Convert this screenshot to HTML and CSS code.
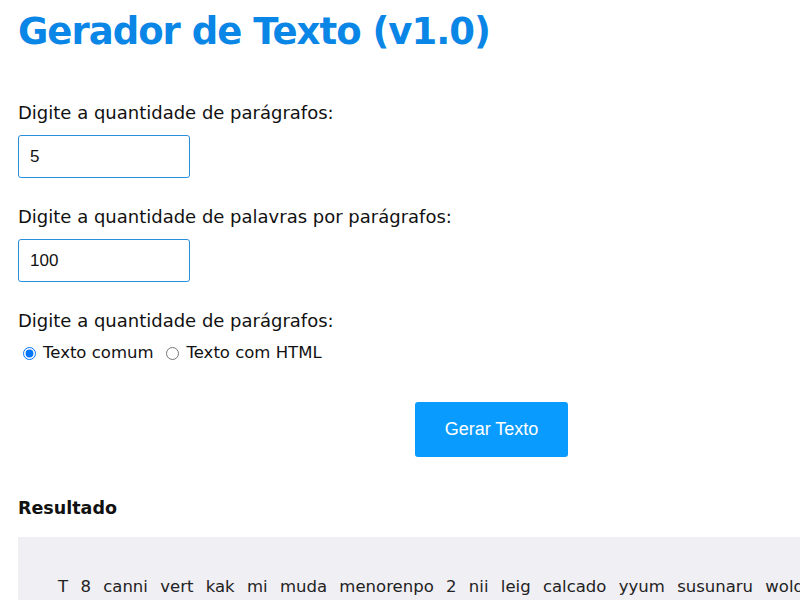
FILE: index.html
```html
<!DOCTYPE html>
<html lang="pt-BR">
<head>
<meta charset="utf-8">
<title>Gerador de Texto</title>
<link rel="stylesheet" href="styles.css">
</head>
<body>
<main class="page">
  <h1 class="title">Gerador de Texto (v1.0)</h1>

  <div class="field">
    <label class="label" for="qtd">Digite a quantidade de parágrafos:</label>
    <input class="input" id="qtd" type="text" value="5">
  </div>

  <div class="field">
    <label class="label" for="pal">Digite a quantidade de palavras por parágrafos:</label>
    <input class="input" id="pal" type="text" value="100">
  </div>

  <div class="field">
    <span class="label">Digite a quantidade de parágrafos:</span>
    <div class="radios">
      <label class="radio"><input type="radio" name="tipo" checked> Texto comum</label>
      <label class="radio"><input type="radio" name="tipo"> Texto com HTML</label>
    </div>
  </div>

  <div class="actions">
    <button class="btn" type="button">Gerar Texto</button>
  </div>

  <h3 class="result-title">Resultado</h3>
  <div class="result">
    <p>T 8 canni vert kak mi muda menorenpo 2 nii leig calcado yyum susunaru woldee fanta roto miel ka vurto sapin dol mara kenti lo vasso amber tuli ne goro.</p>
  </div>
</main>
</body>
</html>
```

FILE: styles.css
```css
html, body {
  margin: 0;
  padding: 0;
  overflow: hidden;
  background: #fff;
}

body {
  font-family: "DejaVu Sans", "Open Sans", sans-serif;
  color: #111;
}

.page {
  width: 947px;
  padding: 0 18px;
}

.title {
  margin: 0;
  padding-top: 8px;
  font-size: 37px;
  line-height: 48px;
  font-weight: 700;
  color: #0a86e6;
  letter-spacing: -1px;
}

.field {
  margin-top: 45px;
}

.field + .field {
  margin-top: 27px;
}

.label {
  display: block;
  font-size: 18px;
  line-height: 24px;
  color: #111;
}

.input {
  display: block;
  box-sizing: border-box;
  width: 172px;
  height: 43px;
  margin-top: 10px;
  padding: 0 11px;
  border: 1px solid #2a8fdb;
  border-radius: 3px;
  font-family: "Liberation Sans", Arial, sans-serif;
  font-size: 17px;
  color: #111;
  outline: none;
}

.radios {
  display: flex;
  gap: 8px;
  margin-top: 10px;
}

.radio {
  display: flex;
  align-items: center;
  font-size: 16.5px;
  line-height: 20px;
  color: #111;
}

.radio input {
  margin: 0 7px 0 5px;
  width: 13px;
  height: 13px;
}

.actions {
  display: flex;
  justify-content: center;
  margin-top: 39px;
}

.btn {
  width: 153px;
  height: 55px;
  border: none;
  border-radius: 3px;
  background: #0a9bff;
  color: #fff;
  font-family: "Liberation Sans", Arial, sans-serif;
  font-size: 18px;
}

.result-title {
  margin: 39px 0 0;
  font-size: 17.5px;
  line-height: 24px;
  font-weight: 700;
  color: #111;
}

.result {
  margin-top: 17px;
  background: #f0eff4;
  padding: 37px 40px 32px;
}

.result p {
  margin: 0;
  font-size: 16.5px;
  line-height: 26px;
  text-align: justify;
  word-spacing: 6px;
  color: #222;
}
```
